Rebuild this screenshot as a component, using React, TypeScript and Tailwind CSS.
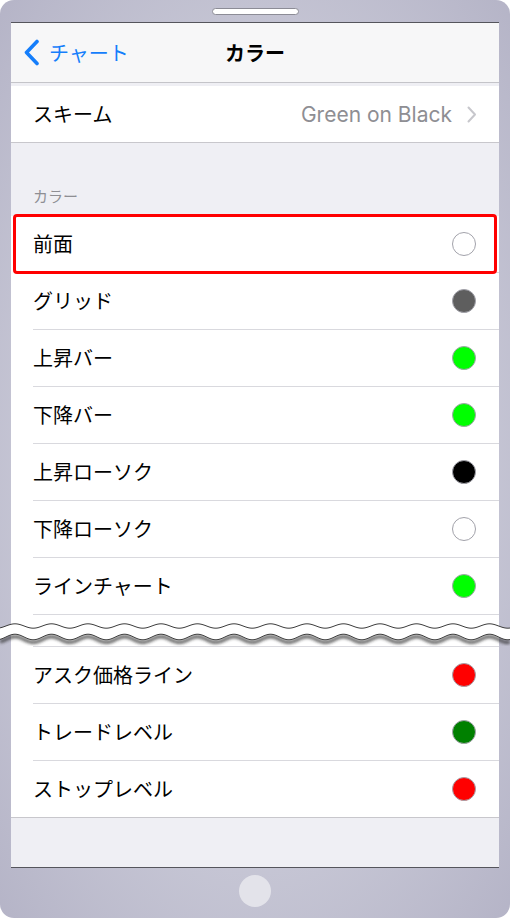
import React from 'react';

const jp = { fontFamily: '"Noto Sans CJK JP", "Noto Sans", sans-serif' };
const latin = { fontFamily: 'Inter, "Noto Sans CJK JP", sans-serif' };

type ColorRow = { label: string; color: string };

const upperRows: ColorRow[] = [
  { label: '前面', color: '#ffffff' },
  { label: 'グリッド', color: '#5e5e5e' },
  { label: '上昇バー', color: '#00ff00' },
  { label: '下降バー', color: '#00ff00' },
  { label: '上昇ローソク', color: '#000000' },
  { label: '下降ローソク', color: '#ffffff' },
  { label: 'ラインチャート', color: '#00ff00' },
];

const lowerRows: ColorRow[] = [
  { label: 'アスク価格ライン', color: '#ff0000' },
  { label: 'トレードレベル', color: '#008000' },
  { label: 'ストップレベル', color: '#ff0000' },
];

// wavy edge, page x coords (svg starts at page x = 0)
const wave = (cy: number, amp: number, reverse = false) => {
  const pts: string[] = [];
  for (let i = 0; i <= 510; i += 2) {
    const x = reverse ? 510 - i : i;
    const y = cy - amp * Math.cos((2 * Math.PI * (x - 15)) / 36.5);
    pts.push(`${x},${y.toFixed(2)}`);
  }
  return pts;
};

const topEdge = wave(11, 2.2);
const bottomEdge = wave(22, 2.8);
const bandPath = `M${topEdge.join(' L')} L${wave(22, 2.8, true).join(' L')} Z`;
const topPath = `M${topEdge.join(' L')}`;
const bottomPath = `M${bottomEdge.join(' L')}`;

const Swatch = ({ color }: { color: string }) => (
  <span
    className="w-[24px] h-[24px] rounded-full border border-[#a2a2aa] shrink-0"
    style={{ backgroundColor: color }}
  />
);

const Row = ({ row, highlight, last }: { row: ColorRow; highlight?: boolean; last?: boolean }) => (
  <div className={`relative h-[57px] flex ${last ? 'border-b border-[#c8c7cc]' : ''}`}>
    <div
      className={`flex-1 flex items-center justify-between pr-[23px] ml-[22px] ${
        last ? '' : 'border-b border-[#d9d9de]'
      }`}
    >
      <span className="text-[20px] text-black leading-none" style={jp}>
        {row.label}
      </span>
      <Swatch color={row.color} />
    </div>
    {highlight && (
      <div className="absolute -top-[2px] -bottom-[1px] left-[2px] right-[2px] border-[3px] border-[#ff0000] rounded-[4px]" />
    )}
  </div>
);

export default function App() {
  return (
    <div className="w-[510px] h-[918px] rounded-[14px] bg-[radial-gradient(ellipse_at_center,#c9c9d7_55%,#b5b4c7_100%)] flex flex-col overflow-hidden">
      {/* top bezel */}
      <div className="h-[22px] flex justify-center pt-[8px]">
        <div className="w-[87px] h-[7px] rounded-full bg-white border border-[#8c8c96]" />
      </div>

      {/* screen */}
      <div className="mx-[11px] flex-1 flex flex-col bg-[#efeff4] border-t border-b border-[#55555c]">
        {/* nav bar */}
        <div className="h-[60px] bg-[#f7f7f8] border-b border-[#c4c4c9] grid grid-cols-[1fr_auto_1fr] items-center">
          <div className="flex items-center pl-[12px] gap-[9px] text-[#157efb]">
            <svg width="17" height="27" viewBox="0 0 17 27">
              <path d="M14 2.5 L3.5 13.5 L14 24.5" fill="none" stroke="#157efb" strokeWidth="3.6" strokeLinecap="round" strokeLinejoin="round" />
            </svg>
            <span className="text-[20px] leading-none" style={jp}>
              チャート
            </span>
          </div>
          <span className="text-[20px] font-bold text-black leading-none" style={jp}>
            カラー
          </span>
          <div />
        </div>

        <div className="h-[3px]" />

        {/* scheme row */}
        <div className="h-[57px] bg-white border-b border-[#c8c7cc] flex items-center justify-between pl-[22px] pr-[22px]">
          <span className="text-[20px] text-black leading-none" style={jp}>
            スキーム
          </span>
          <div className="flex items-center gap-[15px]">
            <span className="text-[21px] text-[#8e8e93] leading-none" style={latin}>
              Green on Black
            </span>
            <svg width="10" height="17" viewBox="0 0 10 17">
              <path d="M1.5 1.5 L8 8.5 L1.5 15.5" fill="none" stroke="#c7c7cc" strokeWidth="2" strokeLinecap="round" strokeLinejoin="round" />
            </svg>
          </div>
        </div>

        {/* section header */}
        <div className="h-[73px] flex items-end pl-[22px] pb-[13px]">
          <span className="text-[15px] text-[#8e8e93] leading-none" style={jp}>
            カラー
          </span>
        </div>

        {/* upper list */}
        <div className="bg-white">
          {upperRows.map((r, i) => (
            <Row key={r.label} row={r} highlight={i === 0} />
          ))}

          {/* cut mark */}
          <div className="h-[31px] -mx-[11px] relative">
            <svg width="510" height="34" viewBox="0 0 510 34" className="absolute left-0 top-0 overflow-visible">
              <defs>
                <filter id="waveShadow" x="-5%" y="-50%" width="110%" height="200%">
                  <feGaussianBlur stdDeviation="1.8" />
                </filter>
              </defs>
              <path d={bottomPath} transform="translate(0 2.5)" fill="none" stroke="#2a2a2a" strokeWidth="3.5" opacity="0.7" filter="url(#waveShadow)" />
              <path d={bandPath} fill="#ffffff" />
              <path d={topPath} fill="none" stroke="#3c3c3c" strokeWidth="1" />
              <path d={bottomPath} fill="none" stroke="#3c3c3c" strokeWidth="1" />
            </svg>
          </div>
          <div className="ml-[22px] h-px bg-[#d9d9de]" />

          {lowerRows.map((r, i) => (
            <Row key={r.label} row={r} last={i === lowerRows.length - 1} />
          ))}
        </div>

        <div className="flex-1" />
      </div>

      {/* bottom bezel */}
      <div className="h-[50px] flex justify-center pt-[7px]">
        <div className="w-[32px] h-[32px] rounded-full bg-[#e3e3ea]" />
      </div>
    </div>
  );
}
